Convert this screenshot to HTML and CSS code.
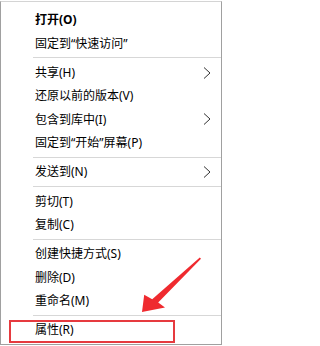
FILE: index.html
```html
<!DOCTYPE html>
<html lang="zh-CN">
<head>
<meta charset="utf-8">
<link rel="stylesheet" href="styles.css">
</head>
<body>
<div class="menu">
  <ul class="list">
    <li class="item bold">打开(O)</li>
    <li class="item">固定到“快速访问”</li>
    <li class="sep"></li>
    <li class="item">共享(H)<svg class="chev" viewBox="0 0 8 12"><path d="M1 0.5 L7 6 L1 11.5"/></svg></li>
    <li class="item">还原以前的版本(V)</li>
    <li class="item">包含到库中(I)<svg class="chev" viewBox="0 0 8 12"><path d="M1 0.5 L7 6 L1 11.5"/></svg></li>
    <li class="item">固定到“开始”屏幕(P)</li>
    <li class="sep"></li>
    <li class="item">发送到(N)<svg class="chev" viewBox="0 0 8 12"><path d="M1 0.5 L7 6 L1 11.5"/></svg></li>
    <li class="sep"></li>
    <li class="item">剪切(T)</li>
    <li class="item">复制(C)</li>
    <li class="sep"></li>
    <li class="item">创建快捷方式(S)</li>
    <li class="item">删除(D)</li>
    <li class="item">重命名(M)</li>
    <li class="sep"></li>
    <li class="item">属性(R)</li>
  </ul>
</div>
<div class="highlight"></div>
<svg class="arrow" viewBox="0 0 222 346" width="222" height="346">
  <polygon points="201,258.8 158.2,302.6 165,307.6 142,312 144.2,294.8 152.2,299.2 199.8,257.4"/>
</svg>
</body>
</html>
```
FILE: styles.css
```css
html, body {
  margin: 0;
  padding: 0;
  background: #ffffff;
}
body {
  width: 222px;
  height: 346px;
  position: relative;
  overflow: hidden;
  font-family: "Noto Sans", "Noto Sans CJK SC", sans-serif;
  font-size: 12px;
  color: #000000;
}
.menu {
  margin-top: 1px;
  width: 222px;
  height: 344px;
  box-sizing: border-box;
  border: 1px solid #a0a0a0;
  border-top-color: #d4d4d4;
  background: #ffffff;
}
.list {
  list-style: none;
  margin: 0;
  padding: 6.33px 0 0 0;
}
.item {
  display: flex;
  align-items: center;
  height: 23.33px;
  line-height: 23.33px;
  padding-left: 34px;
  padding-right: 10px;
  white-space: nowrap;
}
.bold {
  font-weight: bold;
}
.chev {
  margin-left: auto;
  width: 8px;
  height: 12px;
  fill: none;
  stroke: #333333;
  stroke-width: 1;
}
.sep {
  height: 6px;
  display: flex;
  align-items: center;
  margin-left: 32px;
}
.sep::before {
  content: "";
  display: block;
  width: 100%;
  height: 1px;
  background: #d7d7d7;
}
.highlight {
  position: absolute;
  left: 9px;
  top: 320px;
  width: 166px;
  height: 23px;
  box-sizing: border-box;
  border: 2px solid #e63a3f;
}
.arrow {
  position: absolute;
  left: 0;
  top: 0;
}
.arrow polygon {
  fill: #ef2a2f;
}
```
